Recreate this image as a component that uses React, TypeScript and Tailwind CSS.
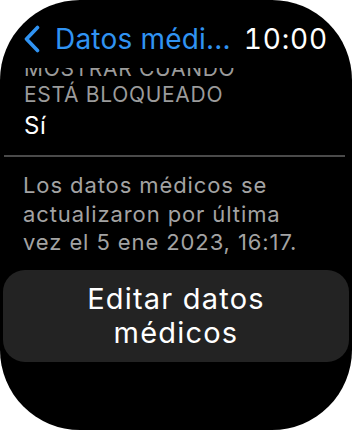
const font = { fontFamily: 'Inter, "Noto Sans", sans-serif' };

// Back chevron for the navigation title
const Chevron = () => (
  <svg width="18" height="28" viewBox="0 0 18 28" className="shrink-0">
    <path
      d="M14.5 2.5 L3.5 14 L14.5 25.5"
      fill="none"
      stroke="#3093f2"
      strokeWidth="3.6"
      strokeLinecap="round"
      strokeLinejoin="round"
    />
  </svg>
);

function App() {
  return (
    <div className="h-[430px] w-[352px] bg-white" style={font}>
      <div className="flex h-full w-full flex-col overflow-hidden rounded-[80px] bg-black">
        {/* NAV HEADER */}
        <div className="flex h-[68px] shrink-0 items-start justify-between pl-[23px] pr-[24px] pt-[22px]">
          <div className="flex items-center gap-[14px]">
            <Chevron />
            <span className="text-[28px] leading-[34px] tracking-[0.2px] text-[#3093f2]">Datos médi...</span>
          </div>
          <span className="text-[28px] leading-[34px] tracking-[0.8px] text-white tabular-nums">10:00</span>
        </div>

        {/* SCROLLED CONTENT (top clipped under header) */}
        <div className="flex-1 overflow-hidden">
          <div className="-mt-[12px]">
            <div className="px-[24px] text-[21px] leading-[26px] tracking-[0.7px] text-[#9b9b9b]">
              <div>MOSTRAR CUANDO</div>
              <div>ESTÁ BLOQUEADO</div>
            </div>
            <div className="mt-[3px] px-[24px] text-[24px] leading-[30px] tracking-[0.5px] text-white">Sí</div>

            <div className="ml-[4px] mr-[7px] mt-[14px] h-[2px] bg-[#4a4a4a]"></div>

            <p className="mt-[14px] whitespace-nowrap px-[23px] text-[22px] leading-[28.5px] tracking-[0.9px] text-[#a3a3a3]">
              Los datos médicos se
              <br />
              actualizaron por última
              <br />
              vez el 5 ene 2023, 16:17.
            </p>

            <button className="mx-[3px] mt-[13px] block w-[346px] rounded-[22px] bg-[#232323] px-4 py-[12px] text-center text-[29px] leading-[34px] tracking-[1.2px] text-white">
              Editar datos
              <br />
              médicos
            </button>
          </div>
        </div>
      </div>
    </div>
  );
}

export default App;
